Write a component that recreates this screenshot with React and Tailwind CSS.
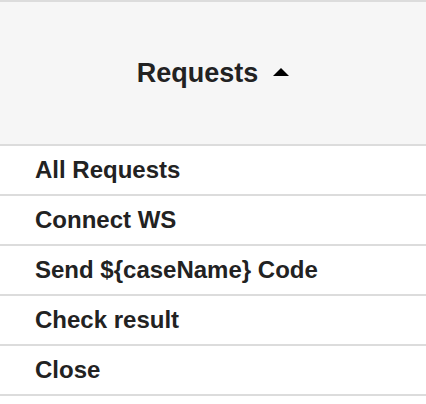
import React from "react";

const items = ["All Requests", "Connect WS", "Send ${caseName} Code", "Check result", "Close"];

const App = () => {
  return (
    <div className="w-[426px] h-[404px] bg-white font-['Liberation_Sans',Arial,sans-serif] text-[#222]">
      <div className="h-[146px] border-y-2 border-[#dcdcdc] bg-[#f6f6f6] flex items-center justify-center">
        <span className="text-[27px] font-bold">Requests</span>
        <svg width="16" height="8" viewBox="0 0 16 8" className="ml-[15px] mb-[2px]">
          <polygon points="8,0 16,8 0,8" fill="#000" />
        </svg>
      </div>
      {items.map((item) => (
        <div
          key={item}
          className="h-[50px] border-b-2 border-[#dcdcdc] flex items-center pl-[35px] text-[24px] font-bold"
        >
          {item}
        </div>
      ))}
    </div>
  );
};

export default App;
